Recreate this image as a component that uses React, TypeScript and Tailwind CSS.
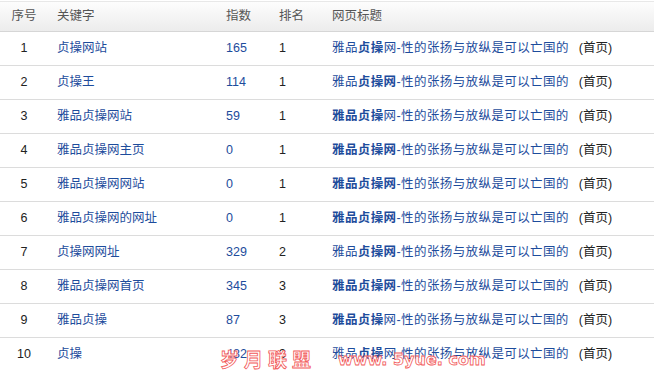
import React from 'react'

// 关键词排名表：一行 = [关键字, 指数, 排名, 标题片段]
// 标题片段里 [text, bold] 表示加粗部分
type Part = [string, boolean]

interface Row {
  kw: string
  idx: string
  rank: string
  title: Part[]
}

const TAIL = '-性的张扬与放纵是可以亡国的'

const ROWS: Row[] = [
  { kw: '贞操网站', idx: '165', rank: '1', title: [['雅品', false], ['贞操', true], ['网' + TAIL, false]] },
  { kw: '贞操王', idx: '114', rank: '1', title: [['雅品', false], ['贞操网', true], [TAIL, false]] },
  { kw: '雅品贞操网站', idx: '59', rank: '1', title: [['雅品贞操', true], ['网' + TAIL, false]] },
  { kw: '雅品贞操网主页', idx: '0', rank: '1', title: [['雅品贞操网', true], [TAIL, false]] },
  { kw: '雅品贞操网网站', idx: '0', rank: '1', title: [['雅品贞操网', true], [TAIL, false]] },
  { kw: '雅品贞操网的网址', idx: '0', rank: '1', title: [['雅品贞操网', true], [TAIL, false]] },
  { kw: '贞操网网址', idx: '329', rank: '2', title: [['雅品', false], ['贞操网', true], [TAIL, false]] },
  { kw: '雅品贞操网首页', idx: '345', rank: '3', title: [['雅品贞操网', true], [TAIL, false]] },
  { kw: '雅品贞操', idx: '87', rank: '3', title: [['雅品贞操', true], ['网' + TAIL, false]] },
  { kw: '贞操', idx: '482', rank: '3', title: [['雅品', false], ['贞操', true], ['网' + TAIL, false]] },
]

const GRID = 'grid grid-cols-[57px_169px_53px_53px_1fr] items-center'

export default function App() {
  return (
    <div
      className="relative w-[654px] h-[371px] overflow-hidden bg-white text-[12.5px] text-[#222]"
      style={{ fontFamily: '"Liberation Sans", Arial, "Noto Sans CJK SC", sans-serif' }}
    >
      <div className="h-px bg-white" />

      {/* ── 表头 ── */}
      <div
        className={`${GRID} h-[31px] border-t border-b border-t-[#e8e8e8] border-b-[#d6d6d6] bg-gradient-to-b from-[#fdfdfd] to-[#ececec] text-[#555]`}
      >
        <span className="w-12 text-center">序号</span>
        <span>关键字</span>
        <span>指数</span>
        <span>排名</span>
        <span>网页标题</span>
      </div>

      {/* ── 数据行 ── */}
      {ROWS.map((r, i) => (
        <div key={i} className={`${GRID} h-[34px] border-b border-[#dcdcdc]`}>
          <span className="w-12 text-center">{i + 1}</span>
          <a className="text-[#1d4c9c]">{r.kw}</a>
          <span className="text-[#1d4c9c]">{r.idx}</span>
          <span>{r.rank}</span>
          <span className="flex items-center whitespace-nowrap">
            <a className="text-[#1d4c9c] tracking-[0.4px]">
              {r.title.map(([t, b], j) => (
                <span key={j} className={b ? 'font-bold' : ''}>
                  {t}
                </span>
              ))}
            </a>
            <span className="ml-[10px]">(首页)</span>
          </span>
        </div>
      ))}

      {/* 水印 */}
      <div
        className="absolute left-[220px] top-[349px] flex items-end gap-[22px] font-bold text-white [-webkit-text-stroke:0.8px_#f25a5a] pointer-events-none"
        style={{ fontFamily: '"Noto Sans CJK SC", sans-serif' }}
      >
        <span className="text-[19px] tracking-[5px] leading-none">岁月联盟</span>
        <span
          className="text-[16px] leading-none"
          style={{ fontFamily: '"DejaVu Sans", sans-serif' }}
        >
          www. 5yue. com
        </span>
      </div>
    </div>
  )
}
